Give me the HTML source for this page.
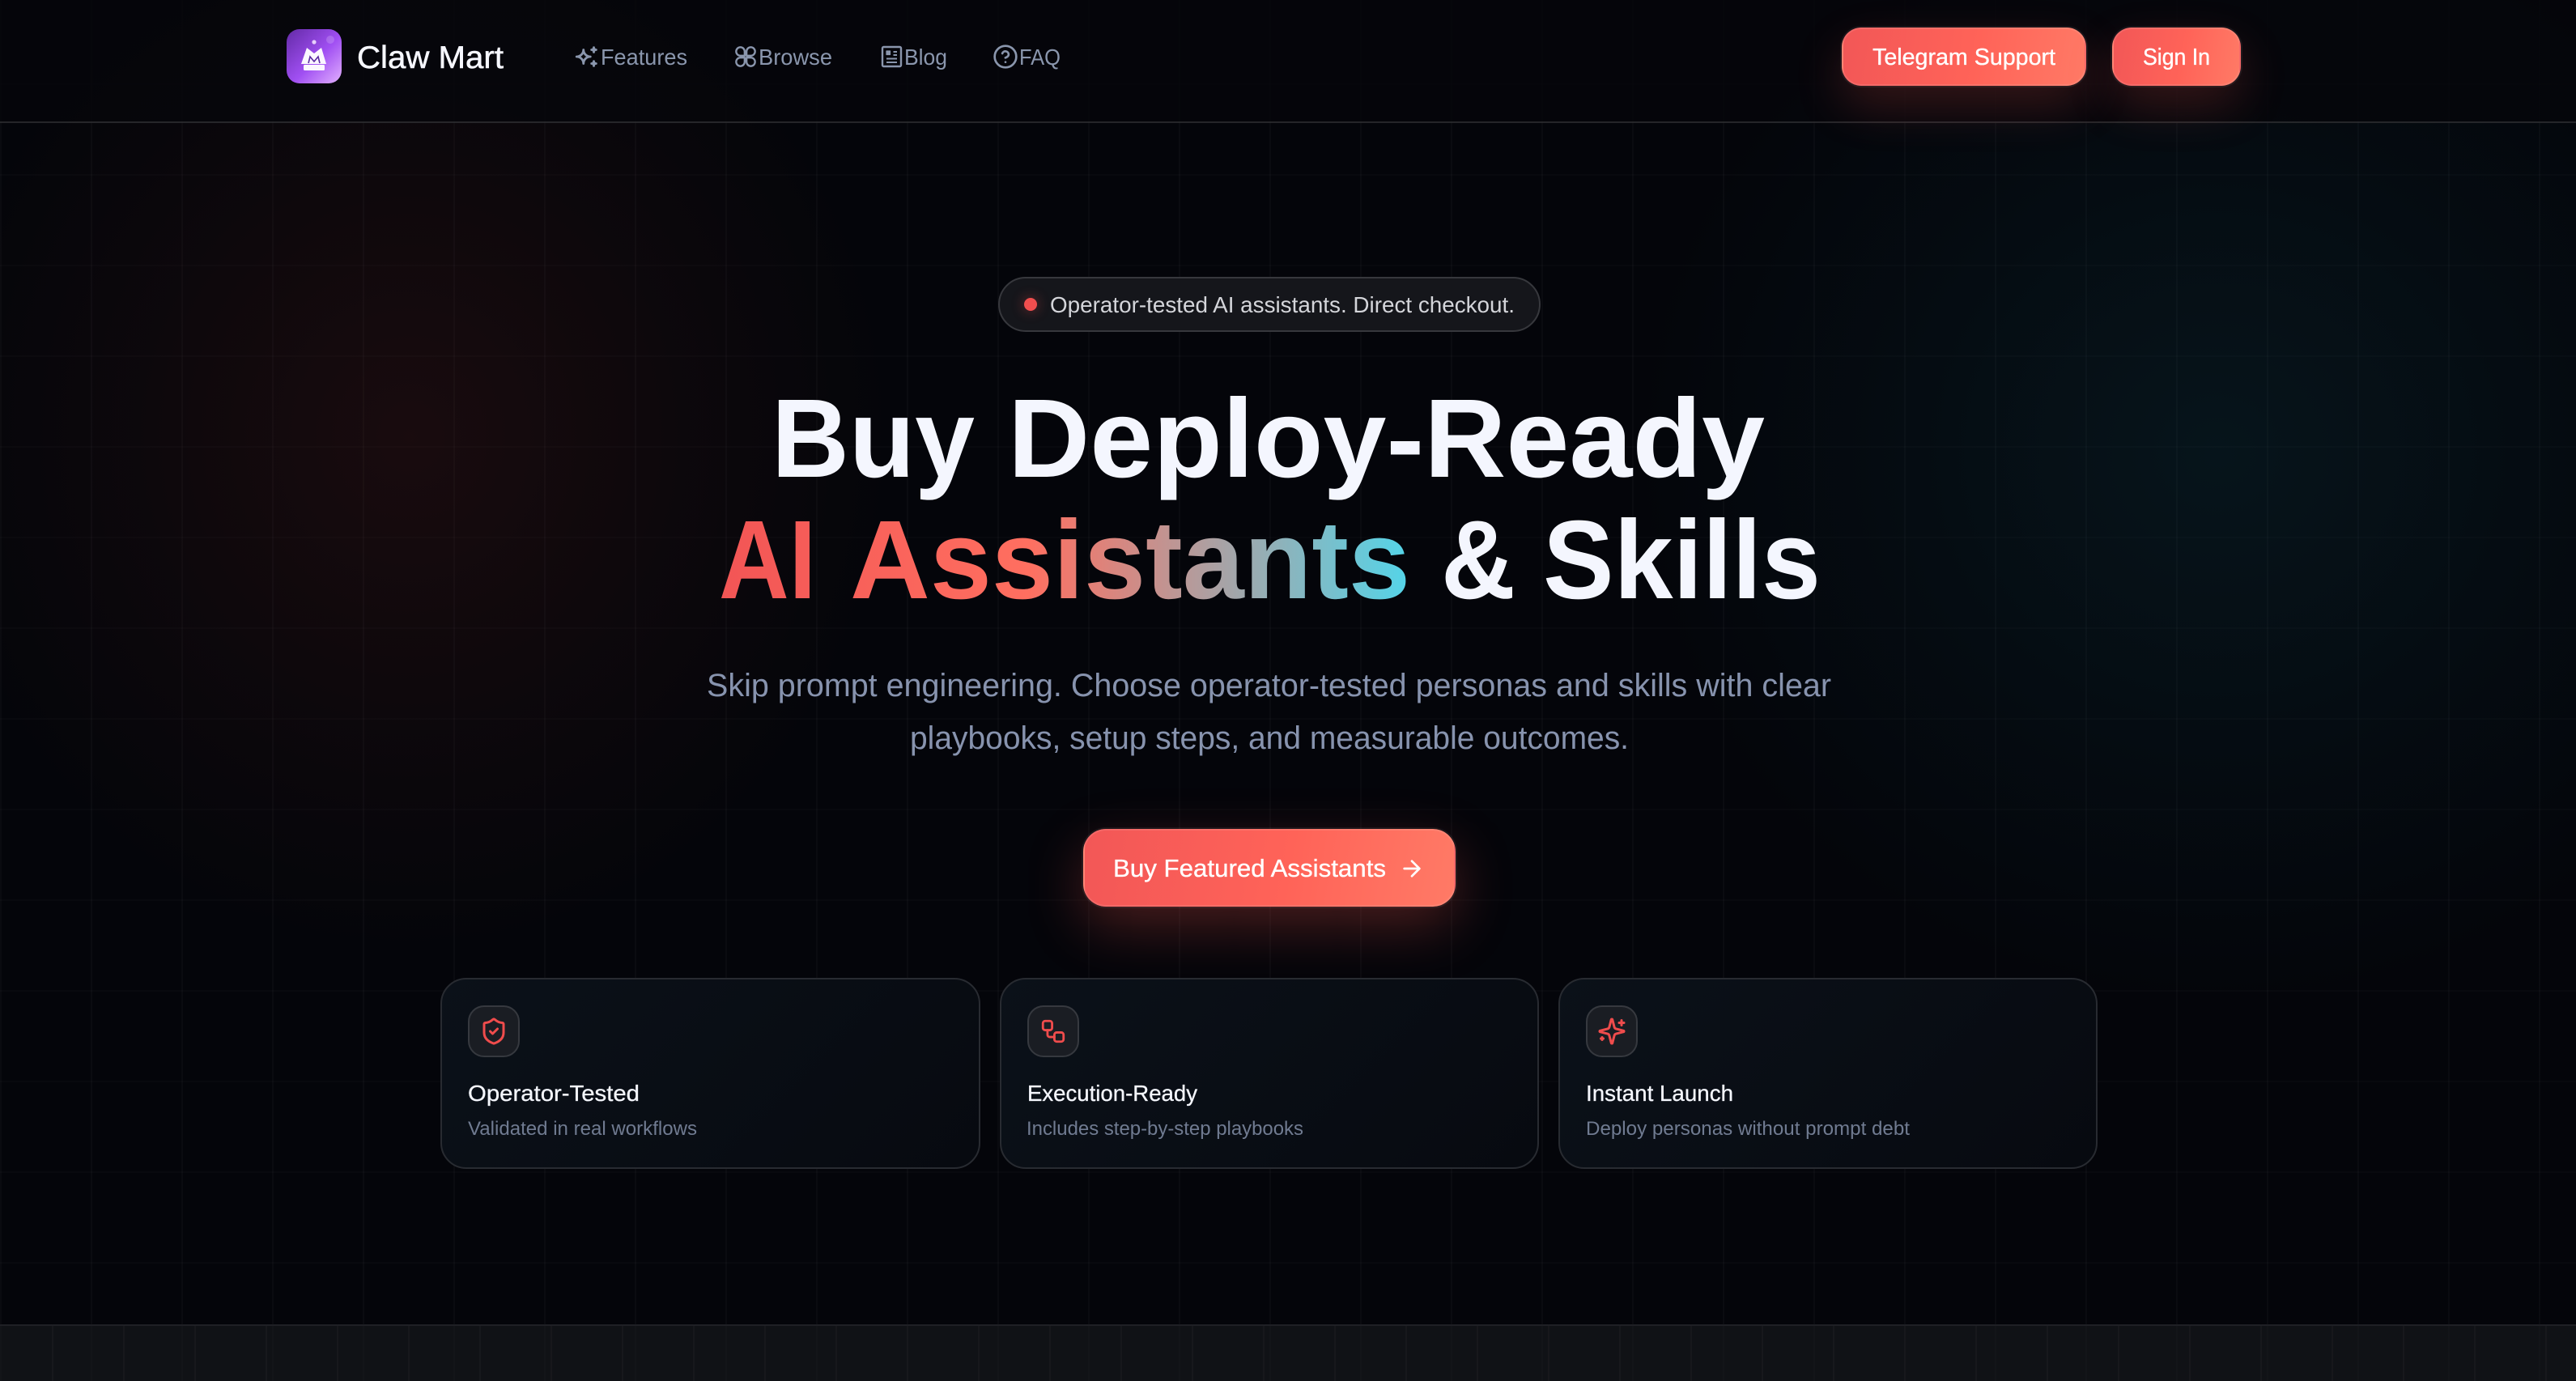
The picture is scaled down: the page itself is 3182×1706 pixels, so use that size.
<!DOCTYPE html>
<html lang="en"><head><meta charset="utf-8"><title>Claw Mart</title>
<style>
*{box-sizing:border-box}
html,body{margin:0;padding:0;width:3182px;height:1706px;overflow:hidden;background:#04050b}
body{position:relative;font-family:"Liberation Sans",sans-serif}
.abs{position:absolute}
.hero{left:0;top:0;width:3182px;height:1636px;background-color:#04050a;
background-image:
radial-gradient(ellipse 600px 640px at 507px 540px,rgba(120,40,32,.18),rgba(120,40,32,.075) 55%,transparent 100%),
radial-gradient(ellipse 720px 680px at 2740px 560px,rgba(16,90,105,.18),rgba(16,90,105,.08) 55%,transparent 100%),
linear-gradient(to right,rgba(255,255,255,.022) 2px,transparent 2px),
linear-gradient(to bottom,rgba(255,255,255,.014) 2px,transparent 2px);
background-size:auto,auto,112px 112px,112px 112px;background-position:0 0,0 0,0 0,0 103px}
.nav{left:0;top:0;width:3182px;height:152px;background:rgba(6,6,11,.82);border-bottom:2px solid rgba(255,255,255,.13)}
.foot{left:0;top:1636px;width:3182px;height:70px;background-color:#101216;border-top:2px solid #1f2025;
background-image:linear-gradient(to right,transparent 64px,#17181c 64px,#17181c 66px,transparent 66px),linear-gradient(to right,rgba(255,255,255,.012) 2px,transparent 2px);
background-size:88px 100%,112px 100%}
.btn{background:linear-gradient(100deg,#f25757 0%,#ff6358 55%,#ff7a66 100%);border:2px solid rgba(255,255,255,.1);background-clip:border-box}
.glow{box-shadow:0 0 0 2px rgba(255,255,255,.06),0 24px 60px rgba(255,90,78,.2)}
.pill{left:1233px;top:342px;width:670px;height:68px;border-radius:34px;background:#15161b;border:2px solid #37383d}
.dot{left:1265px;top:368px;width:16px;height:16px;border-radius:50%;background:#f04e4e;box-shadow:0 0 16px rgba(240,78,78,.45)}
.card{top:1208px;height:236px;border-radius:32px;border:2px solid #282b31;background:linear-gradient(135deg,#0b1119,#070a10)}
.ib{top:1242px;width:64px;height:64px;border-radius:20px;background:#1a1d23;border:2px solid #36393f}
svg{position:absolute;left:0;top:0;overflow:visible}
</style></head><body>
<div class="abs hero"></div>
<div class="abs nav"></div>
<div class="abs btn glow" style="left:2275px;top:34px;width:302px;height:72px;border-radius:24px"></div>
<div class="abs btn glow" style="left:2609px;top:34px;width:159px;height:72px;border-radius:24px"></div>
<div class="abs pill"></div>
<div class="abs dot"></div>
<div class="abs btn" style="left:1338px;top:1024px;width:460px;height:96px;border-radius:28px;box-shadow:0 0 0 2px rgba(255,255,255,.06),0 24px 70px rgba(255,90,78,.28)"></div>
<div class="abs card" style="left:544px;width:667px"></div>
<div class="abs card" style="left:1235px;width:666px"></div>
<div class="abs card" style="left:1925px;width:666px"></div>
<div class="abs ib" style="left:578px"></div>
<div class="abs ib" style="left:1269px"></div>
<div class="abs ib" style="left:1959px"></div>
<div class="abs foot"></div>

<svg width="3182" height="1706" viewBox="0 0 3182 1706" xmlns="http://www.w3.org/2000/svg" font-family="'Liberation Sans',sans-serif">
<defs>
<linearGradient id="lg" x1="0" y1="0" x2="1" y2="1"><stop offset="0" stop-color="#632aa6"/><stop offset=".55" stop-color="#a04ff2"/><stop offset="1" stop-color="#e2b0ff"/></linearGradient>
<linearGradient id="tg" gradientUnits="userSpaceOnUse" x1="888" y1="0" x2="1738" y2="0"><stop offset="0" stop-color="#f25555"/><stop offset=".45" stop-color="#ff6f60"/><stop offset="1" stop-color="#55d4e8"/></linearGradient>
</defs>

<!-- logo -->
<rect x="354" y="36" width="68" height="67" rx="16" fill="url(#lg)"/>
<circle cx="388" cy="52" r="2.6" fill="#e6cffb"/>
<circle cx="408" cy="49" r="5" fill="#fff" opacity=".18"/>
<path d="M372 79 379 59 388 66 397 59 403 79Z" fill="#fbf7ff"/>
<rect x="375" y="80" width="26" height="7" rx="1.5" fill="#fbf7ff"/>
<path d="M381 78 383 70 388 76 393 70 395 78" fill="none" stroke="#5a2aa0" stroke-width="1.6"/>
<text x="441" y="84" font-size="38.5" fill="#f6f7ff" stroke="#f6f7ff" stroke-width=".5" textLength="181" lengthAdjust="spacingAndGlyphs">Claw Mart</text>

<!-- nav -->
<g fill="#8a96ad" font-size="28">
<text x="742" y="80" textLength="107" lengthAdjust="spacingAndGlyphs">Features</text>
<text x="937" y="80" textLength="91" lengthAdjust="spacingAndGlyphs">Browse</text>
<text x="1117" y="80" textLength="53" lengthAdjust="spacingAndGlyphs">Blog</text>
<text x="1259" y="80" textLength="51" lengthAdjust="spacingAndGlyphs">FAQ</text>
</g>
<g fill="none" stroke="#8a96ad" stroke-width="2" stroke-linecap="round" stroke-linejoin="round">
<svg x="708" y="53" width="34" height="34" viewBox="0 0 24 24"><path d="M16 18a2 2 0 0 1 2 2a2 2 0 0 1 2 -2a2 2 0 0 1 -2 -2a2 2 0 0 1 -2 2zm0 -12a2 2 0 0 1 2 2a2 2 0 0 1 2 -2a2 2 0 0 1 -2 -2a2 2 0 0 1 -2 2zm-7 12a6 6 0 0 1 6 -6a6 6 0 0 1 -6 -6a6 6 0 0 1 -6 6a6 6 0 0 1 6 6z"/></svg>
<svg x="907" y="56" width="28" height="28" viewBox="0 0 24 24"><path d="M11 11H6.5a4.5 4.5 0 1 1 4.5-4.5Z"/><path d="M13 11V6.5a4.5 4.5 0 1 1 4.5 4.5Z"/><path d="M11 13V17.5a4.5 4.5 0 1 1-4.5-4.5Z"/><path d="M13 13H17.5a4.5 4.5 0 1 1-4.5 4.5Z"/></svg>
<svg x="1226" y="54" width="32" height="32" viewBox="0 0 24 24"><circle cx="12" cy="12" r="10"/><path d="M9.09 9a3 3 0 0 1 5.83 1c0 2-3 3-3 3M12 17h.01"/></svg>
<rect x="1090" y="58" width="23" height="24" rx="1.5" stroke-width="2.4"/>
<rect x="1095" y="63" width="4.5" height="4.5" fill="#8a96ad" stroke-width="1.2"/>
<path d="M1103.500 64h4.500M1103.500 68h4.500M1095 72.500h13M1095 77h13" stroke-width="2" stroke-linecap="butt"/>
</g>
<text x="2313" y="80" font-size="28.500" fill="#fff" stroke="#fff" stroke-width=".35" textLength="226" lengthAdjust="spacingAndGlyphs">Telegram Support</text>
<text x="2647" y="80" font-size="28.500" fill="#fff" stroke="#fff" stroke-width=".35" textLength="83" lengthAdjust="spacingAndGlyphs">Sign In</text>

<!-- badge -->
<text x="1297" y="386" font-size="28" fill="#d4d5da" textLength="574" lengthAdjust="spacingAndGlyphs">Operator-tested AI assistants. Direct checkout.</text>

<!-- heading -->
<g font-size="138" font-weight="700" fill="#f4f6fe">
<text x="953" y="589" textLength="251" lengthAdjust="spacingAndGlyphs">Buy</text>
<text x="1245" y="589" textLength="935" lengthAdjust="spacingAndGlyphs">Deploy-Ready</text>
<text x="888" y="739" fill="url(#tg)" textLength="120" lengthAdjust="spacingAndGlyphs">AI</text>
<text x="1050" y="739" fill="url(#tg)" textLength="692" lengthAdjust="spacingAndGlyphs">Assistants</text>
<text x="1780" y="739" textLength="92" lengthAdjust="spacingAndGlyphs">&amp;</text>
<text x="1906" y="739" textLength="343" lengthAdjust="spacingAndGlyphs">Skills</text>
</g>

<!-- sub -->
<g font-size="40" fill="#8793ae">
<text x="873" y="860" textLength="1389" lengthAdjust="spacingAndGlyphs">Skip prompt engineering. Choose operator-tested personas and skills with clear</text>
<text x="1124" y="925" textLength="888" lengthAdjust="spacingAndGlyphs">playbooks, setup steps, and measurable outcomes.</text>
</g>

<!-- cta -->
<text x="1375" y="1083" font-size="30.500" fill="#fff" stroke="#fff" stroke-width=".35" textLength="337" lengthAdjust="spacingAndGlyphs">Buy Featured Assistants</text>
<svg x="1728" y="1057" width="32" height="32" viewBox="0 0 24 24" fill="none" stroke="#fff" stroke-width="2" stroke-linecap="round" stroke-linejoin="round"><path d="M5 12h14M12 5l7 7-7 7"/></svg>

<!-- card icons -->
<g fill="none" stroke="#ef4c4c" stroke-width="2" stroke-linecap="round" stroke-linejoin="round">
<svg x="592" y="1256" width="36" height="36" viewBox="0 0 24 24"><path d="M20 13c0 5-3.500 7.500-7.660 8.950a1 1 0 0 1-.67-.01C7.500 20.500 4 18 4 13V6a1 1 0 0 1 1-1c2 0 4.500-1.200 6.240-2.720a1.170 1.170 0 0 1 1.520 0C14.510 3.810 17 5 19 5a1 1 0 0 1 1 1z"/><path d="m9 12 2 2 4-4"/></svg>
<svg x="1284" y="1257" width="34" height="34" viewBox="0 0 24 24"><rect x="3" y="3" width="8" height="8" rx="2"/><path d="M7 11v4a2 2 0 0 0 2 2h4"/><rect x="13" y="13" width="8" height="8" rx="2"/></svg>
<svg x="1973" y="1256" width="36" height="36" viewBox="0 0 24 24"><path d="M9.937 15.500A2 2 0 0 0 8.500 14.063l-6.135-1.582a.5.5 0 0 1 0-.962L8.500 9.936A2 2 0 0 0 9.937 8.500l1.582-6.135a.5.5 0 0 1 .963 0L14.063 8.500A2 2 0 0 0 15.500 9.937l6.135 1.581a.5.5 0 0 1 0 .964L15.500 14.063a2 2 0 0 0-1.437 1.437l-1.582 6.135a.5.5 0 0 1-.963 0z"/><path d="M20 3v4M22 5h-4M4 17v2M5 18H3"/></svg>
</g>

<!-- card text -->
<g font-size="28" fill="#f4f6fc" stroke="#f4f6fc" stroke-width=".3">
<text x="578" y="1360" textLength="212" lengthAdjust="spacingAndGlyphs">Operator-Tested</text>
<text x="1269" y="1360" textLength="210" lengthAdjust="spacingAndGlyphs">Execution-Ready</text>
<text x="1959" y="1360" textLength="182" lengthAdjust="spacingAndGlyphs">Instant Launch</text>
</g>
<g font-size="24" fill="#707b91">
<text x="578" y="1402" textLength="283" lengthAdjust="spacingAndGlyphs">Validated in real workflows</text>
<text x="1268" y="1402" textLength="342" lengthAdjust="spacingAndGlyphs">Includes step-by-step playbooks</text>
<text x="1959" y="1402" textLength="400" lengthAdjust="spacingAndGlyphs">Deploy personas without prompt debt</text>
</g>
</svg>
</body></html>
